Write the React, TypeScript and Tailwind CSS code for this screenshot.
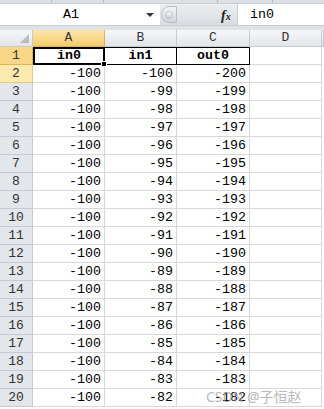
import React from "react";

const mono = { fontFamily: '"Liberation Mono", "DejaVu Sans Mono", monospace' };

const rows = Array.from({ length: 19 }, (_, i) => ({
  n: i + 2,
  a: -100,
  b: -100 + i,
  c: -200 + i,
}));

const colHead = "flex items-center justify-center border-r border-b border-[#c5cbd3] bg-gradient-to-b from-[#f6f7f9] to-[#e3e6ea] text-[13px] text-[#333]";
const rowHead = "flex items-center justify-center border-r border-b border-[#c5cbd3] bg-[#e3e6eb] text-[13px] text-[#333]";
const cell = "flex items-center justify-end pr-[3px] border-r border-b border-[#d8d8d8] text-[13.3px] text-black";

export default function App() {
  return (
    <div className="w-[324px] h-[409px] overflow-hidden bg-white relative" style={mono}>
      {/* ribbon leftovers */}
      <div className="h-[3px] bg-[#dde1e6] flex">
        <div className="w-[52px] border-r border-[#b8bec6]" />
        <div className="w-[52px] border-r border-[#b8bec6]" />
        <div className="w-[114px] border-r border-[#b8bec6]" />
        <div className="w-[55px] border-r border-[#b8bec6]" />
      </div>

      {/* formula bar */}
      <div className="h-[22px] flex bg-[#dfe3e8] border-t border-[#c9ced5]">
        <div className="w-[160px] bg-white flex items-center relative">
          <span className="absolute left-[63px] text-[13.3px] text-black">A1</span>
          <span className="absolute left-[146px] top-[9px] w-0 h-0 border-l-[4px] border-r-[4px] border-t-[4px] border-l-transparent border-r-transparent border-t-[#333]" />
        </div>
        <div className="w-[77px] flex items-center relative bg-gradient-to-b from-[#eceef1] to-[#d9dde2]">
          <div className="absolute left-[1px] top-[2px] w-[16px] h-[17px] rounded-l-full bg-gradient-to-b from-[#f2f3f5] to-[#d2d6dc] border border-[#b9bec5] flex items-center justify-center">
            <div className="w-[8px] h-[8px] rounded-full bg-gradient-to-b from-[#fafafa] to-[#c9cdd2] border border-[#c0c4ca]" />
          </div>
          <span
            className="absolute left-[61px] top-[1px] text-[14px] italic text-[#222]"
            style={{ fontFamily: '"Liberation Serif", serif', fontWeight: 700 }}
          >
            f<span className="text-[10px]">x</span>
          </span>
        </div>
        <div className="flex-1 bg-white flex items-center pl-[12px] text-[13.3px] text-black border-l border-[#c9ced5]">in0</div>
      </div>

      <div className="h-[5px] bg-[#dfe3e8] border-t border-[#c9ced5]" />

      {/* grid */}
      <div className="grid grid-cols-[33px_72px_72px_73px_72px_2px] auto-rows-[18px] [grid-template-rows:17px]">
        <div className={colHead + " relative"}>
          <svg className="absolute right-[3px] bottom-[3px]" width="9" height="9" viewBox="0 0 9 9">
            <polygon points="9,0 9,9 0,9" fill="#b8bdc4" />
          </svg>
        </div>
        <div className="flex items-center justify-center border-r border-b border-[#e2b34d] bg-gradient-to-b from-[#fbe6ad] to-[#f5cc6a] text-[13px] text-[#333]">A</div>
        <div className={colHead}>B</div>
        <div className={colHead}>C</div>
        <div className={colHead}>D</div>
        <div className={colHead} />

        {/* row 1 */}
        <div className="flex items-center justify-center border-r border-b border-[#e2b34d] bg-[#f8d685] text-[13px] text-[#333]">1</div>
        <div className="relative flex items-center justify-center border-2 border-black font-bold text-[13.3px] bg-white">
          in0
          <span className="absolute -right-[4px] -bottom-[4px] w-[6px] h-[6px] bg-black border border-white" />
        </div>
        <div className="flex items-center justify-center border-r border-b border-t border-black font-bold text-[13.3px]">in1</div>
        <div className="flex items-center justify-center border-r border-b border-t border-black font-bold text-[13.3px]">out0</div>
        <div className="border-r border-b border-[#d8d8d8]" />
        <div />

        {rows.map((r) => (
          <React.Fragment key={r.n}>
            <div className={r.n === 2 ? "flex items-center justify-center border-r border-b border-[#e8c77a] bg-[#fce9ae] text-[13px] text-[#333]" : rowHead}>
              {r.n}
            </div>
            <div className={cell}>{r.a}</div>
            <div className={cell}>{r.b}</div>
            <div className={cell}>{r.c}</div>
            <div className={cell} />
            <div />
          </React.Fragment>
        ))}
      </div>

      <div
        className="absolute left-[206px] top-[388px] text-[14px] leading-[18px] text-[#a8a8a8] opacity-80 whitespace-nowrap"
        style={{ fontFamily: '"Noto Sans", "Noto Sans CJK SC", sans-serif' }}
      >
        CSDN @子恒赵
      </div>
    </div>
  );
}
